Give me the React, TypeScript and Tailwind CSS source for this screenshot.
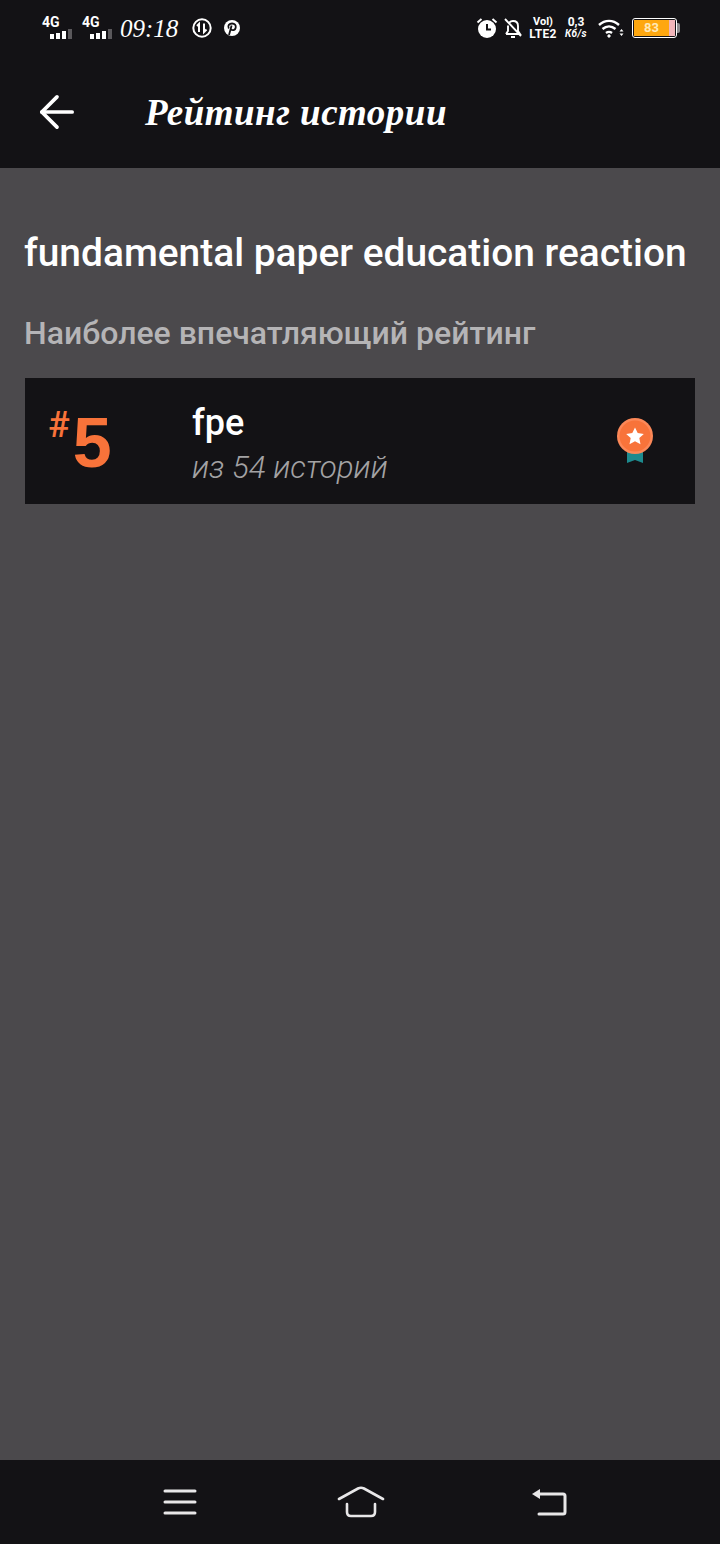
import { ArrowLeft } from "lucide-react";

function Signal() {
    return (
        <div className="relative h-[24px] w-[32px]">
            <span className="absolute left-0 top-[-2px] font-['Roboto',sans-serif] text-[14px] font-bold leading-[16px] text-white">4G</span>
            <svg className="absolute left-[7px] top-[13px]" width="26" height="11" viewBox="0 0 26 11">
                <rect x="1" y="5" width="4" height="5" fill="#fff" />
                <rect x="7" y="4" width="4" height="6" fill="#fff" />
                <rect x="13" y="2" width="4" height="8" fill="#fff" />
                <rect x="19" y="0" width="4" height="10" fill="#5a585b" />
            </svg>
        </div>
    );
}

function StatusBar() {
    return (
        <div className="flex h-[56px] items-center justify-between pl-[42px] pr-[40px]">
            <div className="flex items-center">
                <Signal />
                <div className="ml-[8px]"><Signal /></div>
                <span className="ml-[6px] font-['Liberation_Serif',serif] text-[25px] italic leading-none text-white">09:18</span>
                <svg className="ml-[13px]" width="22" height="22" viewBox="0 0 22 22" fill="none" stroke="#fff">
                    <circle cx="11" cy="11" r="8.7" strokeWidth="2" />
                    <path d="M8 15V7L6 9M13 6.5V15l2.5-2.5" strokeWidth="2" />
                </svg>
                <svg className="ml-[9px]" width="20" height="20" viewBox="0 0 20 20">
                    <circle cx="10" cy="10" r="8" fill="#fff" />
                    <path d="M7 17l2.6-9.5M6.8 10.5c-1.6-3 .6-5 3.3-5 2.6 0 4.1 1.8 3.6 4.2-.5 2.4-3.200 3.300-4.600 1.500" fill="none" stroke="#131215" strokeWidth="1.800" />
                </svg>
            </div>
            <div className="flex items-center">
                <svg width="22" height="22" viewBox="0 0 22 22">
                    <circle cx="11" cy="12" r="9" fill="#fff" />
                    <path d="M1.500 5.500L5.500 2M20.500 5.500L16.500 2" stroke="#fff" strokeWidth="2" />
                    <path d="M11 7v5.500h4" stroke="#131215" strokeWidth="2" fill="none" />
                </svg>
                <svg className="ml-[5px]" width="20" height="22" viewBox="0 0 20 22" fill="none" stroke="#fff" strokeWidth="1.900">
                    <path d="M3 17h14l-2-3V9c0-3-2-5-5-5-1.500 0-2.700.5-3.500 1.400M5 8.500V14l-2 3M8 20h4M2 2l16 17" />
                </svg>
                <div className="ml-[5px] flex w-[30px] flex-col items-center font-['Roboto',sans-serif] font-bold leading-none text-white">
                    <span className="text-[11px] leading-[12px]">Vol)</span>
                    <span className="text-[12px] leading-[12px] tracking-[0.3px]">LTE2</span>
                </div>
                <div className="ml-[2px] flex w-[32px] flex-col items-center font-['Roboto',sans-serif] font-bold leading-none text-white">
                    <span className="text-[12px] leading-[12px]">0,3</span>
                    <span className="text-[10px] italic leading-[12px] tracking-[0.5px]">Кб/s</span>
                </div>
                <svg className="ml-[6px]" width="26" height="20" viewBox="0 0 26 20" fill="none" stroke="#fff" strokeWidth="2.400">
                    <path d="M1 7c6-5.500 14-5.500 20 0M4.500 11c4-3.500 9-3.500 13 0M8 15c2-1.500 4-1.500 6 0" />
                    <circle cx="11" cy="18" r="1.200" fill="#fff" strokeWidth="1" />
                    <path d="M23.500 11l-2 2.500h4zM23.500 18l-2-2.500h4z" fill="#fff" stroke="none" />
                </svg>
                <div className="ml-[8px] flex items-center">
                    <div className="flex h-[20px] w-[45px] overflow-hidden rounded-[3px] border border-white bg-[#131215] p-[1px]">
                        <div className="flex h-full w-[35px] items-center justify-center bg-[#fea70f] font-['Roboto',sans-serif] text-[13px] font-bold text-[#ffe9b8]">83</div>
                        <div className="h-full w-[6px] bg-[#f1b5b9]" />
                    </div>
                    <div className="h-[10px] w-[3px] rounded-r-[2px] bg-[#8d8c8e]" />
                </div>
            </div>
        </div>
    );
}

function Medal() {
    return (
        <svg width="36" height="46" viewBox="0 0 36 46">
            <path d="M10 28h16v17l-8-3-8 3z" fill="#1d8a8e" />
            <circle cx="18" cy="18" r="18" fill="#fc8858" />
            <circle cx="18" cy="18" r="15.500" fill="#f8733a" />
            <path d="M18 9.500l2.700 5.600 6.100.8-4.500 4.200 1.200 6.100-5.500-3-5.500 3 1.200-6.100-4.500-4.200 6.100-.8z" fill="#fff" />
        </svg>
    );
}

export default function App() {
    return (
        <div className="flex h-[1544px] w-[720px] flex-col overflow-hidden bg-[#4b494c] font-['Roboto',sans-serif]">
            <header className="h-[168px] bg-[#131215]">
                <StatusBar />
                <div className="flex h-[112px] items-center pl-[31px]">
                    <ArrowLeft size={52} strokeWidth={1.700} className="text-white" />
                    <h1 className="ml-[62px] font-['Liberation_Serif',serif] text-[37px] font-bold italic leading-none tracking-[0.5px] text-white">Рейтинг истории</h1>
                </div>
            </header>

            <main className="flex-1 px-[24px] pr-[25px] pt-[61px]">
                <h2 className="whitespace-nowrap text-[38.9px] font-medium leading-[48px] text-white">fundamental paper education reaction</h2>
                <h3 className="mt-[37px] text-[32px] font-medium leading-[38px] text-[#b5b4b6]">Наиболее впечатляющий рейтинг</h3>

                <div className="ml-[1px] mt-[26px] flex h-[126px] items-center bg-[#131215]">
                    <div className="flex h-full w-[167px] shrink-0 items-start pl-[23px]">
                        <span className="mt-[27px] text-[36px] font-medium leading-[40px] text-[#f8733a]">#</span>
                        <span className="ml-[3px] mt-[31px] font-['Liberation_Sans',sans-serif] text-[70px] font-bold leading-[68px] text-[#f8733a]">5</span>
                    </div>
                    <div className="mt-[9px] flex-1">
                        <div className="text-[36px] font-medium leading-[44px] text-white">fpe</div>
                        <div className="mt-[1px] text-[31.3px] font-light italic leading-[44px] text-[#a3a2a4]">из 54 историй</div>
                    </div>
                    <div className="mr-[42px]"><Medal /></div>
                </div>
            </main>

            <nav className="flex h-[84px] items-center justify-center bg-[#131215] pl-[9px]">
                <svg width="34" height="28" viewBox="0 0 34 28" stroke="#e8e7e8" strokeWidth="3" strokeLinecap="round">
                    <path d="M2 3h30M2 14h30M2 25h30" />
                </svg>
                <svg className="ml-[140px]" width="48" height="32" viewBox="0 0 48 32" fill="none" stroke="#e8e7e8" strokeWidth="2.600" strokeLinecap="round">
                    <path d="M2 13L21 2.500q3-1.500 6 0L46 13" />
                    <path d="M10 18v8q0 4 4 4h20q4 0 4-4v-8" />
                </svg>
                <svg className="ml-[146px]" width="36" height="28" viewBox="0 0 36 28" fill="none" stroke="#e8e7e8" strokeWidth="3" strokeLinecap="round">
                    <path d="M6 6h26q2 0 2 2v16q0 2-2 2H8" />
                    <path d="M1 6l8-5v10z" fill="#e8e7e8" stroke="none" />
                </svg>
            </nav>
        </div>
    );
}
